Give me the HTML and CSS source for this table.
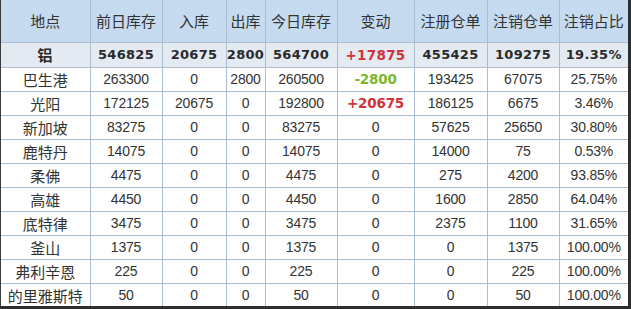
FILE: index.html
```html
<!DOCTYPE html>
<html lang="zh">
<head>
    <meta charset="UTF-8">
    <title>库存</title>
    <link rel="stylesheet" href="styles.css">
</head>
<body>
    <div class="frame">
        <table class="stock">
            <colgroup>
                <col class="c-place">
                <col class="c-prev">
                <col class="c-in">
                <col class="c-out">
                <col class="c-today">
                <col class="c-change">
                <col class="c-reg">
                <col class="c-cancel">
                <col class="c-ratio">
            </colgroup>
            <thead>
                <tr>
                    <th>地点</th>
                    <th>前日库存</th>
                    <th>入库</th>
                    <th>出库</th>
                    <th>今日库存</th>
                    <th>变动</th>
                    <th>注册仓单</th>
                    <th>注销仓单</th>
                    <th>注销占比</th>
                </tr>
            </thead>
            <tbody>
                <tr class="total">
                    <td class="name">铝</td>
                    <td>546825</td>
                    <td>20675</td>
                    <td>2800</td>
                    <td>564700</td>
                    <td class="up">+17875</td>
                    <td>455425</td>
                    <td>109275</td>
                    <td>19.35%</td>
                </tr>
                <tr>
                    <td class="name">巴生港</td>
                    <td>263300</td><td>0</td><td>2800</td><td>260500</td>
                    <td class="down">-2800</td>
                    <td>193425</td><td>67075</td><td>25.75%</td>
                </tr>
                <tr>
                    <td class="name">光阳</td>
                    <td>172125</td><td>20675</td><td>0</td><td>192800</td>
                    <td class="up">+20675</td>
                    <td>186125</td><td>6675</td><td>3.46%</td>
                </tr>
                <tr>
                    <td class="name">新加坡</td>
                    <td>83275</td><td>0</td><td>0</td><td>83275</td>
                    <td>0</td>
                    <td>57625</td><td>25650</td><td>30.80%</td>
                </tr>
                <tr>
                    <td class="name">鹿特丹</td>
                    <td>14075</td><td>0</td><td>0</td><td>14075</td>
                    <td>0</td>
                    <td>14000</td><td>75</td><td>0.53%</td>
                </tr>
                <tr>
                    <td class="name">柔佛</td>
                    <td>4475</td><td>0</td><td>0</td><td>4475</td>
                    <td>0</td>
                    <td>275</td><td>4200</td><td>93.85%</td>
                </tr>
                <tr>
                    <td class="name">高雄</td>
                    <td>4450</td><td>0</td><td>0</td><td>4450</td>
                    <td>0</td>
                    <td>1600</td><td>2850</td><td>64.04%</td>
                </tr>
                <tr>
                    <td class="name">底特律</td>
                    <td>3475</td><td>0</td><td>0</td><td>3475</td>
                    <td>0</td>
                    <td>2375</td><td>1100</td><td>31.65%</td>
                </tr>
                <tr>
                    <td class="name">釜山</td>
                    <td>1375</td><td>0</td><td>0</td><td>1375</td>
                    <td>0</td>
                    <td>0</td><td>1375</td><td>100.00%</td>
                </tr>
                <tr>
                    <td class="name">弗利辛恩</td>
                    <td>225</td><td>0</td><td>0</td><td>225</td>
                    <td>0</td>
                    <td>0</td><td>225</td><td>100.00%</td>
                </tr>
                <tr>
                    <td class="name">的里雅斯特</td>
                    <td>50</td><td>0</td><td>0</td><td>50</td>
                    <td>0</td>
                    <td>0</td><td>50</td><td>100.00%</td>
                </tr>
            </tbody>
        </table>
    </div>
</body>
</html>
```

FILE: styles.css
```css
* {
    margin: 0;
    padding: 0;
    box-sizing: border-box;
}

body {
    background-color: #ffffff;
    color: #222;
    font-family: "Liberation Sans", "Noto Sans CJK SC", sans-serif;
}

/* Outer frame */
.frame {
    width: 631px;
    height: 309px;
    border-left: 1px solid #3a3a3a;
    border-right: 3px solid #2e2e2e;
    border-bottom: 3px solid #2e2e2e;
    overflow: hidden;
}

/* Table */
.stock {
    width: 627px;
    border-collapse: collapse;
    table-layout: fixed;
}

.c-place { width: 89px; }
.c-prev { width: 72px; }
.c-in { width: 64px; }
.c-out { width: 39px; }
.c-today { width: 72px; }
.c-change { width: 77px; }
.c-reg { width: 73px; }
.c-cancel { width: 72px; }
.c-ratio { width: 69px; }

th, td {
    border: 1px solid #aabdd1;
    text-align: center;
    white-space: nowrap;
    overflow: hidden;
}

.stock tr > :first-child { border-left: none; }
.stock tr > :last-child { border-right: none; }
.stock thead th { border-top: none; }
.stock tbody tr:last-child td { border-bottom: none; }

th {
    height: 42px;
    background-color: #c6dbf0;
    color: #333;
    font-family: "Noto Sans CJK SC", sans-serif;
    font-weight: 400;
    font-size: 15px;
}

td {
    height: 24px;
    font-size: 14px;
    color: #333;
    letter-spacing: -0.2px;
}

td.name {
    font-family: "Noto Sans CJK SC", sans-serif;
    font-size: 15px;
    letter-spacing: 0;
}

/* Summary row */
.total td {
    height: 25px;
    background-color: #e3eaf2;
    font-family: "DejaVu Sans", sans-serif;
    font-weight: 700;
    font-size: 13px;
    color: #2a2a2a;
    letter-spacing: 0.3px;
}

.total td.name {
    font-family: "Noto Sans CJK SC", sans-serif;
    font-size: 15px;
}

.up { color: #d0343a; }
.down { color: #7cb82f; }

td.up, td.down {
    font-family: "DejaVu Sans", sans-serif;
    font-weight: 700;
    font-size: 13.5px;
}

.total td.up { color: #d0343a; }
```
